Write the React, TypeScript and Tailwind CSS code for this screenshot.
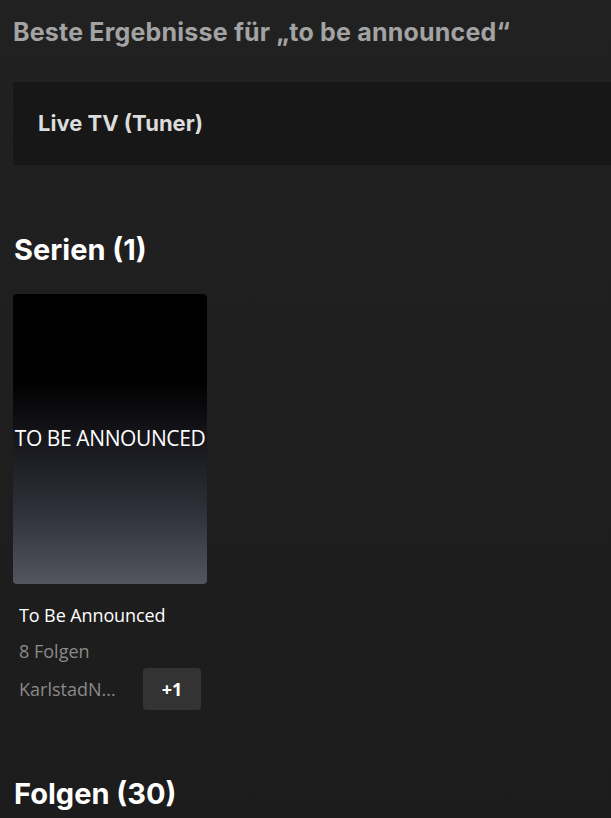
import React from "react"

const heading = { fontFamily: '"Inter", "Noto Sans", sans-serif' }
const body = { fontFamily: '"Open Sans", "Noto Sans", sans-serif' }

export default function App() {
  return (
    <div className="min-h-[818px] w-[611px] overflow-hidden bg-gradient-to-b from-[#212121] to-[#1c1c1c] pl-[13px]">
      <h2 style={heading} className="pt-[15px] text-[25px] font-bold leading-[34px] tracking-[0.2px] text-[#a3a3a3] whitespace-nowrap">
        Beste Ergebnisse für „to be announced“
      </h2>

      <div className="mt-[33px] flex h-[83px] w-[620px] items-center bg-[#171717] pl-[25px]">
        <span style={heading} className="text-[22px] font-bold text-[#dcdcdc]">Live TV (Tuner)</span>
      </div>

      <h2 style={heading} className="mt-[67px] pl-px text-[29px] font-bold leading-[36px] text-white">
        Serien (1)
      </h2>

      <div className="mt-[26px] w-[194px]">
        <div className="flex h-[290px] items-center justify-center rounded-[4px] bg-[linear-gradient(to_bottom,#000_0%,#000_30%,#16161c_50%,#30303a_75%,#55555f_100%)]">
          <span style={body} className="whitespace-nowrap text-[21px] tracking-[-0.4px] text-white">TO BE ANNOUNCED</span>
        </div>
        <div style={body} className="px-[6px] pt-[19px]">
          <div className="text-[18px] leading-[24px] tracking-[-0.1px] text-white">To Be Announced</div>
          <div className="mt-[12px] text-[18px] leading-[24px] text-[#8a8a8a]">8 Folgen</div>
          <div className="mt-[5px] flex items-center justify-between">
            <span className="text-[18px] text-[#8a8a8a]">KarlstadN...</span>
            <span className="flex h-[42px] w-[58px] items-center justify-center rounded-[4px] bg-[#333333] text-[18px] font-bold text-white">
              +1
            </span>
          </div>
        </div>
      </div>

      <h2 style={heading} className="mt-[66px] pl-px text-[29px] font-bold leading-[36px] text-white">
        Folgen (30)
      </h2>
    </div>
  )
}
